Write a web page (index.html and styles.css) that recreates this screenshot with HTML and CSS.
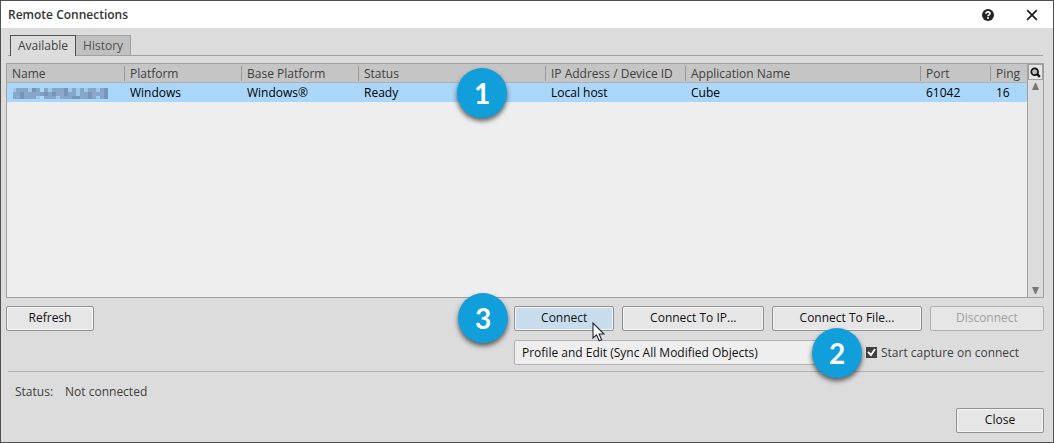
FILE: index.html
```html
<!DOCTYPE html>
<html lang="en">
  <head>
    <meta charset="UTF-8">
    <meta name="viewport" content="width=device-width, initial-scale=1.0">
    <title>Remote Connections</title>
    <link rel="stylesheet" href="styles.css">
  </head>
  <body>
    <div class="window">
      <header class="title-bar">
        <h1>Remote Connections</h1>
        <button class="title-button" type="button" aria-label="Help">
          <svg width="12" height="12" viewBox="0 0 12 12">
            <circle cx="6" cy="6" r="6" fill="#222"/>
            <path d="M4 4.7C4 2.2 8 2.2 8 4.5C8 5.9 6 5.8 6 7.3" fill="none" stroke="#fff" stroke-width="1.7"/>
            <rect x="5.1" y="8.2" width="1.8" height="1.7" fill="#fff"/>
          </svg>
        </button>
        <button class="title-button" type="button" aria-label="Close window">
          <svg width="12" height="12" viewBox="0 0 12 12">
            <path d="M1.2 1.2L10.8 10.8M10.8 1.2L1.2 10.8" fill="none" stroke="#222" stroke-width="1.8"/>
          </svg>
        </button>
      </header>

      <nav class="tabs">
        <button class="tab active" type="button">Available</button>
        <button class="tab" type="button">History</button>
      </nav>

      <main class="list">
        <div class="table-area">
          <table>
            <colgroup>
              <col class="col-name">
              <col class="col-platform">
              <col class="col-platform">
              <col class="col-status">
              <col class="col-address">
              <col>
              <col class="col-port">
              <col class="col-ping">
            </colgroup>
            <thead>
              <tr>
                <th>Name</th>
                <th>Platform</th>
                <th>Base Platform</th>
                <th>Status</th>
                <th>IP Address / Device ID</th>
                <th>Application Name</th>
                <th>Port</th>
                <th>Ping</th>
              </tr>
            </thead>
            <tbody>
              <tr>
                <td>
                  <svg class="masked" width="96" height="12" viewBox="0 0 96 12" shape-rendering="crispEdges">
                    <path d="M1 1h27v11h-27zM32 1h64v11h-64z" fill="#86a7c9"/>
                    <path d="M28 5h4v4h-4z" fill="#7b9fc6"/>
                    <path d="M1 1h3v4h-3zM16 1h4v4h-4zM24 9h4v3h-4zM36 1h4v4h-4zM44 9h4v3h-4zM56 1h4v4h-4zM64 1h4v8h-4zM72 1h4v4h-4zM84 1h4v4h-4zM84 9h4v3h-4z" fill="#a0c8ec"/>
                    <path d="M8 5h4v7h-4zM20 1h4v4h-4zM32 5h4v4h-4zM40 5h4v4h-4zM52 1h4v8h-4zM60 9h8v3h-8zM76 5h4v7h-4zM92 1h4v11h-4z" fill="#7794b9"/>
                    <path d="M4 9h4v3h-4zM12 5h4v4h-4zM48 5h4v7h-4zM68 9h4v3h-4zM80 5h4v4h-4zM88 5h4v4h-4z" fill="#8fa6cf"/>
                  </svg>
                </td>
                <td>Windows</td>
                <td>Windows®</td>
                <td class="marked">Ready<span class="badge badge-row">1</span></td>
                <td>Local host</td>
                <td>Cube</td>
                <td>61042</td>
                <td>16</td>
              </tr>
            </tbody>
          </table>
        </div>
        <div class="scroll-side">
          <button class="search-button" type="button" aria-label="Search">
            <svg width="11" height="11" viewBox="0 0 11 11">
              <circle cx="4.7" cy="4.7" r="3.4" fill="#bbb" stroke="#111" stroke-width="1.7"/>
              <path d="M7.2 7.2L9.8 9.8" stroke="#111" stroke-width="2.4"/>
            </svg>
          </button>
          <div class="scrollbar">
            <svg width="9" height="7" viewBox="0 0 9 7"><path d="M4 0h1l3 7H1z" fill="#777"/></svg>
            <svg width="9" height="7" viewBox="0 0 9 7"><path d="M4 7h1l3-7H1z" fill="#777"/></svg>
          </div>
        </div>
      </main>

      <section class="actions">
        <button class="button refresh" type="button">Refresh</button>
        <div class="connect-panel">
          <span class="badge badge-connect">3</span>
          <div class="connect-buttons">
            <button class="button connect" type="button">Connect
              <svg class="cursor" width="13" height="20" viewBox="0 0 13 20">
                <path d="M1 1V16L4.5 12.8L7.2 18.8L9.7 17.7L7.1 12H12z" fill="#fff" stroke="#223" stroke-width="1.1"/>
              </svg>
            </button>
            <button class="button connect-ip" type="button">Connect To IP...</button>
            <button class="button connect-file" type="button">Connect To File...</button>
            <button class="button disconnect" type="button" disabled>Disconnect</button>
          </div>
          <div class="connect-options">
            <select aria-label="Capture mode">
              <option>Profile and Edit (Sync All Modified Objects)</option>
            </select>
            <label class="capture">
              <input type="checkbox" checked>
              Start capture on connect
              <span class="badge badge-capture">2</span>
            </label>
          </div>
        </div>
      </section>

      <footer class="footer">
        <p class="status"><span>Status:</span><span>Not connected</span></p>
        <button class="button close" type="button">Close</button>
      </footer>
    </div>
  </body>
</html>
```
FILE: styles.css
```css
* {
  box-sizing: border-box;
}

body {
  margin: 0;
  font-family: "Open Sans", "Noto Sans", sans-serif;
  font-size: 12px;
  line-height: 16px;
  color: #404040;
}

button,
select {
  font: inherit;
  color: #111;
}

svg {
  display: block;
}

.window {
  display: flex;
  flex-direction: column;
  min-height: 100vh;
  background: #dcdcdc;
  border: 1px solid #505050;
}

/* Title bar */
.title-bar {
  display: flex;
  align-items: center;
  gap: 20px;
  height: 27px;
  padding: 0 9px 0 7px;
  background: #fff;
}

.title-bar h1 {
  flex: 1;
  margin: 0;
  font-size: 12px;
  font-weight: 600;
  color: #333;
}

.title-button {
  padding: 6px;
  background: none;
  border: 0;
}

/* Tabs */
.tabs {
  display: flex;
  margin: 7px 10px 0 7px;
  padding-left: 2px;
  border-bottom: 1px solid #a0a0a0;
}

.tab {
  height: 20px;
  padding: 0 7px;
  color: #505050;
  background: #c0c0c0;
  border: 1px solid #a0a0a0;
  border-width: 1px 1px 0 0;
}

.tab.active {
  height: 21px;
  margin-bottom: -1px;
  color: #404040;
  background: #dcdcdc;
  border-color: #505050;
  border-width: 1px 1px 0 1px;
}

/* Connection list */
.list {
  display: flex;
  flex: 1;
  margin: 7px 9px 0 5px;
  background: #eee;
  border: 1px solid #a0a0a0;
}

.table-area {
  flex: 1;
}

table {
  width: 100%;
  table-layout: fixed;
  border-collapse: separate;
  border-spacing: 0;
}

.col-name {
  width: 118px;
}

.col-platform {
  width: 117px;
}

.col-status {
  width: 187px;
}

.col-address {
  width: 140px;
}

.col-port {
  width: 70px;
}

.col-ping {
  width: 36px;
}

th,
td {
  height: 19px;
  padding: 1px 0 0 5px;
  text-align: left;
  white-space: nowrap;
}

th {
  font-weight: 400;
  background: linear-gradient(#999, #999) right 2px / 1px 15px no-repeat #c5c5c5;
  border-bottom: 1px solid #b0b0b0;
}

th:last-child {
  background: #c5c5c5;
}

td {
  color: #000;
  background: #aad6f9;
}

.marked {
  position: relative;
}

.scroll-side {
  display: flex;
  flex-direction: column;
  width: 16px;
  background: #dcdcdc;
  border-left: 1px solid #a0a0a0;
}

.search-button {
  display: flex;
  align-items: center;
  justify-content: center;
  height: 16px;
  padding: 0;
  background: #e5e5e5;
  border: 1px solid #a0a0a0;
}

.scrollbar {
  display: flex;
  flex: 1;
  flex-direction: column;
  align-items: center;
  justify-content: space-between;
  padding: 3px 0;
}

/* Numbered markers */
.badge {
  position: absolute;
  z-index: 1;
  width: 50px;
  height: 50px;
  font-family: Lato, sans-serif;
  font-size: 28px;
  font-weight: 700;
  line-height: 50px;
  text-align: center;
  color: #fff;
  background: #109fda;
  border-radius: 50%;
  box-shadow: 0 3px 5px rgba(0, 0, 0, 0.6);
}

.badge-row {
  top: -15px;
  left: 98px;
}

.badge-connect {
  top: -13px;
  left: -56px;
}

.badge-capture {
  top: -17px;
  left: -54px;
}

/* Buttons and options */
.actions {
  display: flex;
  justify-content: space-between;
  align-items: flex-start;
  margin: 8px 9px 0 5px;
}

.button {
  height: 25px;
  padding: 0 0 1px;
  background: #e6e6e6;
  border: 1px solid #909090;
  border-radius: 2px;
  box-shadow: inset 0 0 0 1px #f5f5f5;
}

.refresh,
.close {
  width: 88px;
}

.connect-panel {
  position: relative;
  width: 530px;
}

.connect-buttons {
  display: flex;
  gap: 8px;
}

.connect {
  position: relative;
  flex: 100;
  background: #c7dced;
}

.connect-ip {
  flex: 142;
}

.connect-file {
  flex: 150;
}

.disconnect {
  flex: 114;
  color: #a0a0a0;
  border-color: #b0b0b0;
  box-shadow: none;
}

.cursor {
  position: absolute;
  top: 15px;
  left: 77px;
  z-index: 1;
}

.connect-options {
  display: flex;
  align-items: center;
  gap: 10px;
  margin-top: 9px;
}

select {
  flex: 1;
  height: 25px;
  padding: 0 7px;
  appearance: none;
  background: #eee;
  border: 1px solid #b0b0b0;
  border-radius: 2px;
}

.capture {
  position: relative;
  display: flex;
  align-items: center;
  gap: 4px;
  width: 178px;
}

.capture input {
  width: 11px;
  height: 11px;
  margin: 0;
  appearance: none;
  background: #404040;
}

.capture input:checked {
  background: #404040 url("data:image/svg+xml,%3Csvg xmlns='http://www.w3.org/2000/svg' viewBox='0 0 11 11'%3E%3Cpath d='M2 5L5 8L9 2' fill='none' stroke='white' stroke-width='1.8'/%3E%3C/svg%3E");
}

/* Footer */
.footer {
  display: flex;
  align-items: flex-start;
  justify-content: space-between;
  margin: 6px 9px 0 7px;
  border-top: 1px solid #b0b0b0;
}

.status {
  display: flex;
  gap: 12px;
  margin: 12px 0 0 7px;
}

.close {
  margin: 36px 0 9px;
}
```
